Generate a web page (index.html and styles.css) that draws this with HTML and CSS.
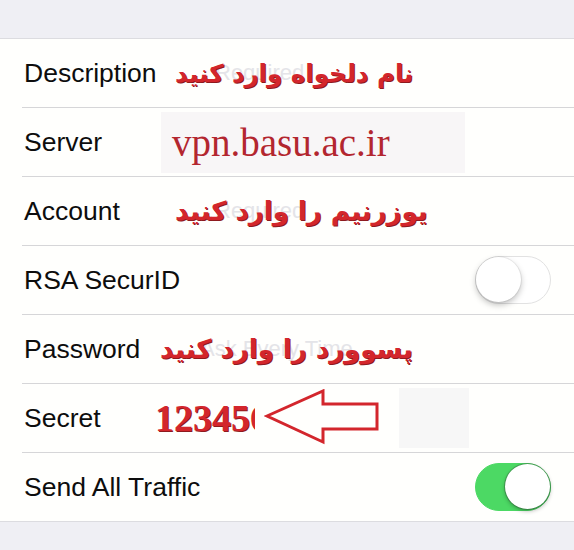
FILE: index.html
```html
<!DOCTYPE html>
<html lang="fa">
<head>
    <meta charset="UTF-8">
    <meta name="viewport" content="width=device-width, initial-scale=1.0">
    <title>VPN</title>
    <link rel="stylesheet" href="styles.css">
</head>
<body>

<div class="top-band"></div>

<div class="group">
    <div class="row">
        <div class="label">Description</div>
        <div class="field field-desc">
            <span class="placeholder">Required</span>
            <span class="note" dir="rtl">نام دلخواه وارد کنید</span>
        </div>
    </div>

    <div class="row">
        <div class="label">Server</div>
        <div class="server-box">vpn.basu.ac.ir</div>
    </div>

    <div class="row">
        <div class="label">Account</div>
        <div class="field field-account">
            <span class="placeholder">Required</span>
            <span class="note" dir="rtl">یوزرنیم را وارد کنید</span>
        </div>
    </div>

    <div class="row">
        <div class="label">RSA SecurID</div>
        <div class="toggle"><span class="knob"></span></div>
    </div>

    <div class="row">
        <div class="label">Password</div>
        <div class="field field-pass">
            <span class="placeholder">Ask Every Time</span>
            <span class="note" dir="rtl">پسوورد را وارد کنید</span>
        </div>
    </div>

    <div class="row">
        <div class="label">Secret</div>
        <div class="secret">123456</div>
        <svg class="arrow" width="118" height="58" viewBox="0 0 118 58">
            <path d="M3 27 L59 2 L59 15 L113 15 L113 40 L59 40 L59 53 Z" fill="none" stroke="#d3262c" stroke-width="3" stroke-linejoin="miter"/>
        </svg>
        <div class="secret-shade"></div>
    </div>

    <div class="row">
        <div class="label">Send All Traffic</div>
        <div class="toggle on"><span class="knob"></span></div>
    </div>
</div>

<div class="bottom-band"></div>

</body>
</html>
```

FILE: styles.css
```css
body {
    margin: 0;
    background-color: #efeff4;
    font-family: "Liberation Sans", Arial, sans-serif;
    width: 574px;
    height: 550px;
    overflow: hidden;
}
.top-band {
    height: 38px;
}
.group {
    background-color: #fffffd;
    border-top: 1px solid #dcdce0;
    border-bottom: 1px solid #dcdce0;
}
.row {
    height: 68px;
    display: flex;
    align-items: center;
    margin-left: 22px;
    padding-left: 2px;
    padding-right: 23px;
    border-bottom: 1px solid #d6d6d8;
}
.row:last-child {
    border-bottom: none;
}
.label {
    width: 131px;
    flex-shrink: 0;
    font-size: 26.5px;
    color: #0d0d0d;
    white-space: nowrap;
}

/* text fields with red notes written on top */
.field {
    display: grid;
    align-items: center;
}
.field > span {
    grid-area: 1 / 1;
}
.placeholder {
    font-size: 22px;
    color: #e4e4e8;
    padding-left: 40px;
}
.note {
    font-family: "DejaVu Sans", sans-serif;
    font-weight: bold;
    font-size: 26px;
    color: #d3262c;
    text-shadow: 1px 1px 0 #8e1a1e;
    white-space: nowrap;
}
.field-desc { margin-left: 20px; }
.field-desc .note { font-size: 24.5px; }
.field-account { margin-left: 20px; }
.field-pass { margin-left: 5px; }

.server-box {
    margin-left: 6px;
    width: 293px;
    height: 61px;
    padding-left: 11px;
    background-color: #f8f6f7;
    font-family: "Liberation Serif", "Times New Roman", serif;
    font-size: 39px;
    line-height: 61px;
    color: #b3262f;
}

.secret {
    width: 100px;
    overflow: hidden;
    white-space: nowrap;
    font-family: "Liberation Serif", "Times New Roman", serif;
    font-weight: bold;
    font-size: 38px;
    color: #d3262c;
    text-shadow: 1px 1px 0 #8e1a1e;
}
.arrow {
    margin-left: 9px;
    flex-shrink: 0;
}
.secret-shade {
    margin-left: 17px;
    width: 70px;
    height: 60px;
    background-color: #f7f7f7;
}

.toggle {
    margin-left: auto;
    width: 74px;
    height: 46px;
    border-radius: 24px;
    border: 1px solid #e2e2e2;
    background-color: #fff;
    position: relative;
}
.toggle .knob {
    position: absolute;
    left: 0;
    top: 0;
    width: 45px;
    height: 45px;
    border-radius: 50%;
    background-color: #fff;
    box-shadow: 0 3px 6px rgba(0, 0, 0, 0.25), 0 0 0 1px rgba(0, 0, 0, 0.06);
}
.toggle.on {
    background-color: #4cd964;
    border-color: #4cd964;
}
.toggle.on .knob {
    left: auto;
    right: 0;
    box-shadow: 0 2px 4px rgba(0, 0, 0, 0.3), 0 0 0 1px rgba(60, 120, 70, 0.5);
}
```
